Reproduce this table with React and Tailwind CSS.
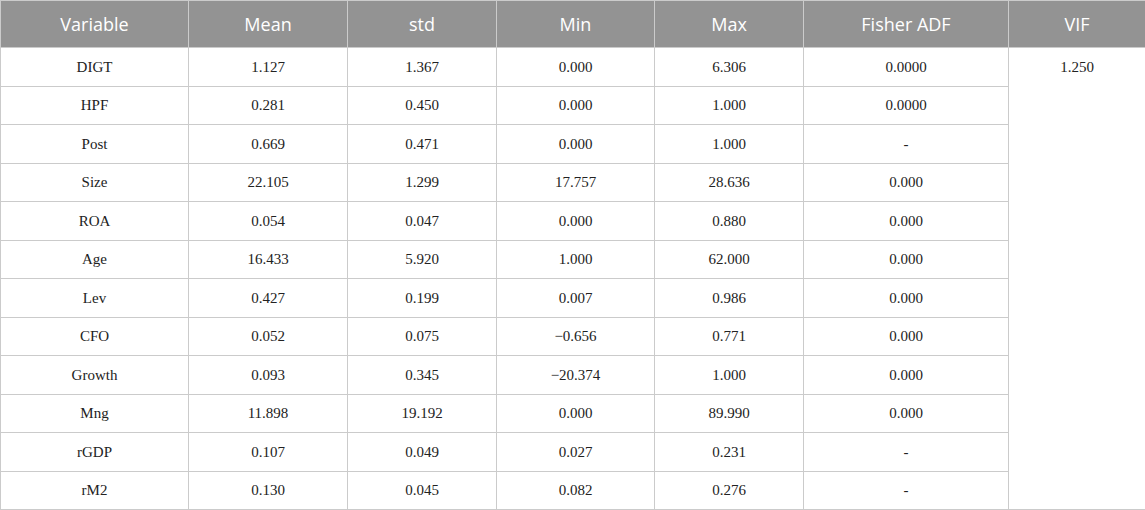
const cols = ['Variable', 'Mean', 'std', 'Min', 'Max', 'Fisher ADF', 'VIF']
const widths = ['w-[188px]', 'w-[159px]', 'w-[149px]', 'w-[158px]', 'w-[149px]', 'w-[205px]', 'w-[137px]']

const rows = [
  ['DIGT', '1.127', '1.367', '0.000', '6.306', '0.0000'],
  ['HPF', '0.281', '0.450', '0.000', '1.000', '0.0000'],
  ['Post', '0.669', '0.471', '0.000', '1.000', '-'],
  ['Size', '22.105', '1.299', '17.757', '28.636', '0.000'],
  ['ROA', '0.054', '0.047', '0.000', '0.880', '0.000'],
  ['Age', '16.433', '5.920', '1.000', '62.000', '0.000'],
  ['Lev', '0.427', '0.199', '0.007', '0.986', '0.000'],
  ['CFO', '0.052', '0.075', '\u22120.656', '0.771', '0.000'],
  ['Growth', '0.093', '0.345', '\u221220.374', '1.000', '0.000'],
  ['Mng', '11.898', '19.192', '0.000', '89.990', '0.000'],
  ['rGDP', '0.107', '0.049', '0.027', '0.231', '-'],
  ['rM2', '0.130', '0.045', '0.082', '0.276', '-'],
]

export default function App() {
  return (
    <div className="w-[1145px] h-[510px] bg-white overflow-hidden">
      <table className="w-[1145px] table-fixed border-collapse">
        <colgroup>
          {widths.map((w, i) => (
            <col key={i} className={w} />
          ))}
        </colgroup>
        <thead>
          <tr className="h-[47px] bg-[#939393]">
            {cols.map((c) => (
              <th
                key={c}
                className="border border-[#cbcbcb] p-0 text-center align-middle font-normal text-[18px] text-white font-['Open_Sans',sans-serif]"
              >
                {c}
              </th>
            ))}
          </tr>
        </thead>
        <tbody>
          {rows.map((r, i) => (
            <tr key={r[0]} className="h-[38.5px]">
              {r.map((v, j) => (
                <td
                  key={j}
                  className="border border-[#cbcbcb] p-0 text-center align-middle text-[15px] text-[#222] font-['Liberation_Serif',serif]"
                >
                  {v}
                </td>
              ))}
              {i === 0 && (
                <td
                  rowSpan={12}
                  className="border border-[#cbcbcb] px-0 pt-[8px] text-center align-top text-[15px] text-[#222] font-['Liberation_Serif',serif]"
                >
                  1.250
                </td>
              )}
            </tr>
          ))}
        </tbody>
      </table>
    </div>
  )
}
